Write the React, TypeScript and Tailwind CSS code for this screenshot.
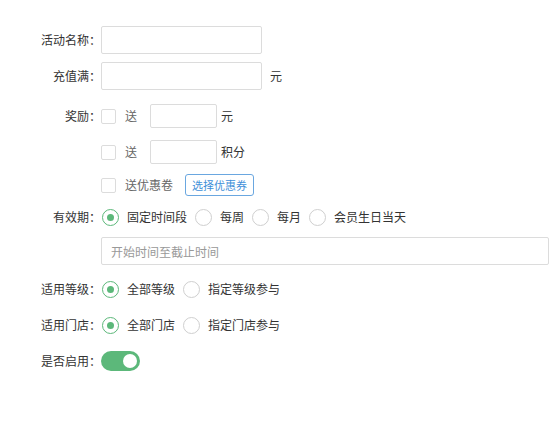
function Radio({ checked, label }: { checked?: boolean; label: string }) {
  return (
    <div className="flex items-center mr-[8px]">
      <span
        className={
          checked
            ? "flex items-center justify-center w-[17px] h-[17px] rounded-full border border-[#5cb87a] bg-white"
            : "w-[17px] h-[17px] rounded-full border border-[#cfcfcf] bg-white"
        }
      >
        {checked && <span className="w-[7px] h-[7px] rounded-full bg-[#5cb87a]" />}
      </span>
      <span className="ml-[8px] text-[12px] text-[#333]">{label}</span>
    </div>
  )
}

function Checkbox() {
  return <span className="w-[15px] h-[15px] border border-[#dcdcdc] rounded-[2px] bg-white" />
}

function Label({ text }: { text: string }) {
  return <span className="w-[101px] shrink-0 text-right text-[12px] text-[#333]">{text}</span>
}

export default function App() {
  return (
    <div
      className="w-[550px] h-[421px] bg-white pt-[26px] flex flex-col"
      style={{ fontFamily: '"Noto Sans CJK SC", "Liberation Sans", sans-serif' }}
    >
      <div className="flex items-center h-[28px]">
        <Label text="活动名称：" />
        <input className="w-[161px] h-[28px] border border-[#dcdcdc] rounded-[2px] outline-none" />
      </div>

      <div className="flex items-center h-[28px] mt-[8px]">
        <Label text="充值满：" />
        <input className="w-[161px] h-[28px] border border-[#dcdcdc] rounded-[2px] outline-none" />
        <span className="ml-[8px] text-[12px] text-[#333]">元</span>
      </div>

      <div className="flex items-center h-[24px] mt-[14px]">
        <Label text="奖励：" />
        <div className="flex items-center">
          <Checkbox />
          <span className="ml-[9px] text-[12px] text-[#666]">送</span>
          <input className="ml-[13px] w-[67px] h-[24px] border border-[#dcdcdc] rounded-[2px] outline-none" />
          <span className="ml-[4px] text-[12px] text-[#333]">元</span>
        </div>
      </div>

      <div className="flex items-center h-[24px] mt-[12px] pl-[101px]">
        <Checkbox />
        <span className="ml-[9px] text-[12px] text-[#666]">送</span>
        <input className="ml-[13px] w-[67px] h-[24px] border border-[#dcdcdc] rounded-[2px] outline-none" />
        <span className="ml-[4px] text-[12px] text-[#333]">积分</span>
      </div>

      <div className="flex items-center h-[22px] mt-[10px] pl-[101px]">
        <Checkbox />
        <span className="ml-[9px] text-[12px] text-[#666]">送优惠卷</span>
        <button className="ml-[12px] w-[69px] h-[22px] border border-[#6aa7e0] rounded-[3px] text-[11px] text-[#3f8fd8] bg-white">
          选择优惠券
        </button>
      </div>

      <div className="flex items-center h-[20px] mt-[11px]">
        <Label text="有效期：" />
        <div className="ml-[1px] flex items-center">
          <Radio checked label="固定时间段" />
          <Radio label="每周" />
          <Radio label="每月" />
          <Radio label="会员生日当天" />
        </div>
      </div>

      <div className="flex mt-[10px] pl-[101px]">
        <input
          placeholder="开始时间至截止时间"
          className="w-[448px] h-[28px] border border-[#dcdcdc] rounded-[2px] px-[9px] text-[12px] placeholder:text-[#999] outline-none"
        />
      </div>

      <div className="flex items-center h-[20px] mt-[14px]">
        <Label text="适用等级：" />
        <div className="ml-[1px] flex items-center">
          <Radio checked label="全部等级" />
          <Radio label="指定等级参与" />
        </div>
      </div>

      <div className="flex items-center h-[20px] mt-[16px]">
        <Label text="适用门店：" />
        <div className="ml-[1px] flex items-center">
          <Radio checked label="全部门店" />
          <Radio label="指定门店参与" />
        </div>
      </div>

      <div className="flex items-center h-[20px] mt-[16px]">
        <Label text="是否启用：" />
        <div className="w-[39px] h-[20px] rounded-full bg-[#5cb87a] flex items-center justify-end pr-[3px]">
          <span className="w-[14px] h-[14px] rounded-full bg-white" />
        </div>
      </div>
    </div>
  )
}
